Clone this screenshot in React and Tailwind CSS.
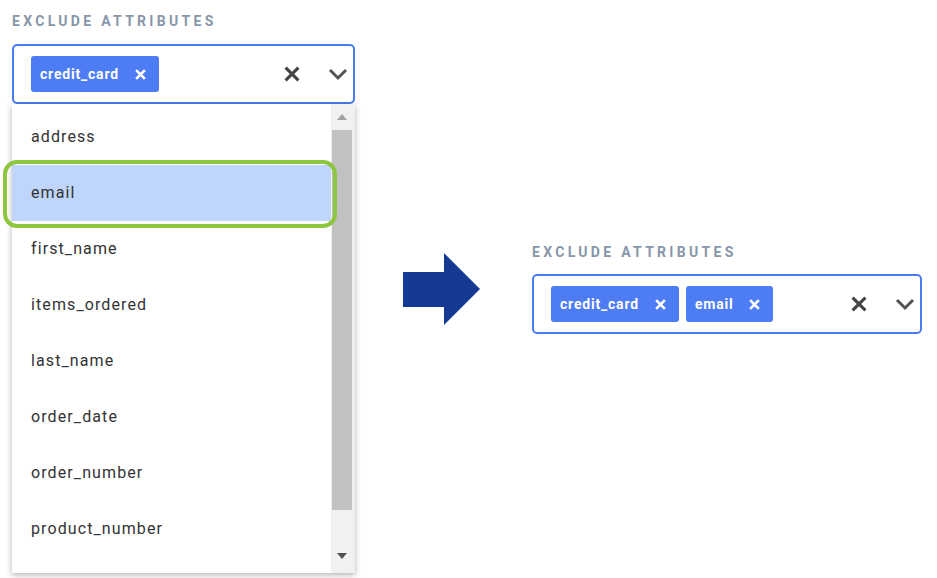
import React from "react";

const font = { fontFamily: "Roboto, 'Liberation Sans', sans-serif" };

const options = [
  "address",
  "email",
  "first_name",
  "items_ordered",
  "last_name",
  "order_date",
  "order_number",
  "product_number",
];

function XIcon({ className, width = "3.4" }) {
  return (
    <svg viewBox="0 0 24 24" className={className} fill="none" stroke="currentColor" strokeWidth={width}>
      <path d="M5 5 L19 19 M19 5 L5 19" />
    </svg>
  );
}

function Chevron({ className }) {
  return (
    <svg viewBox="0 0 24 24" className={className} fill="none" stroke="currentColor" strokeWidth="3">
      <path d="M4 8 L12 16 L20 8" />
    </svg>
  );
}

function Chip({ label }) {
  return (
    <div className="flex h-[36px] items-center gap-[14px] rounded-[3px] bg-[#4d7cf5] pl-[9px] pr-[11px] text-[14px] font-bold tracking-[0.8px] text-white">
      <span>{label}</span>
      <XIcon className="h-[15px] w-[15px]" width="4.2" />
    </div>
  );
}

function Field({ chips, width }) {
  return (
    <div className={`flex h-[60px] items-center rounded-[5px] border-2 border-[#4a7cf0] bg-white pl-[17px] pr-[3px] ${width}`}>
      <div className="flex flex-1 gap-[7px]">
        {chips.map((c) => (
          <Chip key={c} label={c} />
        ))}
      </div>
      <XIcon className="mr-[23px] h-[22px] w-[22px] text-[#444]" />
      <Chevron className="h-[24px] w-[24px] text-[#555]" />
    </div>
  );
}

function Label() {
  return (
    <div className="text-[14px] font-bold uppercase tracking-[3.3px] text-[#8797aa]">Exclude attributes</div>
  );
}

export default function App() {
  return (
    <div className="relative flex h-[578px] w-[937px] bg-white" style={font}>
      <div className="flex w-[403px] flex-col pl-[12px] pt-[11px]">
        <Label />
        <div className="mt-[12px]">
          <Field chips={["credit_card"]} width="w-[343px]" />
        </div>
        <div className="flex h-[469px] w-[343px] overflow-hidden bg-white shadow-[0_2px_6px_rgba(0,0,0,0.3)]">
          <div className="flex-1 pt-[5px]">
            {options.map((o) => (
              <div
                key={o}
                className={`flex h-[56px] items-center pl-[19px] text-[16px] tracking-[1.1px] text-[#333] ${o === "email" ? "bg-[#bfd5fb]" : ""}`}
              >
                {o}
              </div>
            ))}
          </div>
          <div className="flex w-[24px] flex-col items-center bg-[#f1f1f1] pr-[2px]">
            <div className="mt-[10px] h-0 w-0 border-x-[5px] border-b-[6px] border-x-transparent border-b-[#a3a3a3]" />
            <div className="mt-[10px] h-[380px] w-[20px] bg-[#c1c1c1]" />
            <div className="mt-[43px] h-0 w-0 border-x-[5px] border-t-[6px] border-x-transparent border-t-[#505050]" />
          </div>
        </div>
      </div>
      <div className="w-[129px] pt-[253px]">
        <svg viewBox="0 0 78 72" className="h-[72px] w-[78px]">
          <path d="M0 19 H41 V0 L77 36 L41 72 V54 H0 Z" fill="#153a93" />
        </svg>
      </div>
      <div className="flex flex-col pt-[242px]">
        <Label />
        <div className="mt-[11px]">
          <Field chips={["credit_card", "email"]} width="w-[390px]" />
        </div>
      </div>
      <div className="pointer-events-none absolute left-[3px] top-[160px] h-[68px] w-[334px] rounded-[14px] border-[4px] border-[#8dc63f]" />
    </div>
  );
}
